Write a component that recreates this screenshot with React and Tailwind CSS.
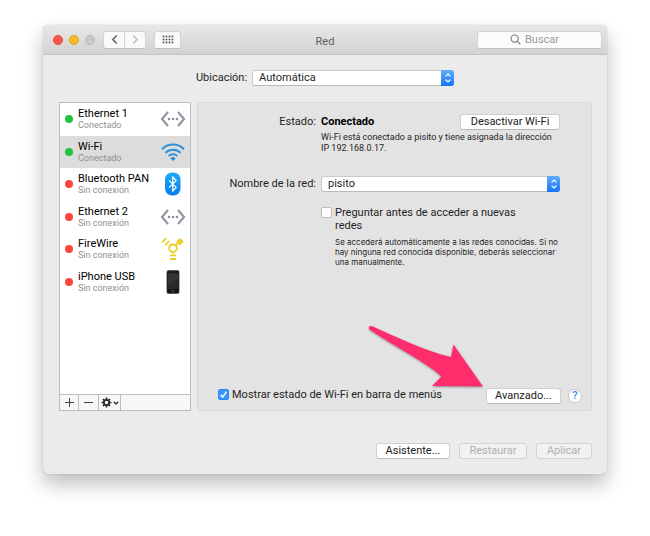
import clsx from "clsx";

const services = [
  { name: "Ethernet 1", status: "Conectado", online: true, icon: EthernetIcon },
  { name: "Wi-Fi", status: "Conectado", online: true, icon: WifiIcon, selected: true },
  { name: "Bluetooth PAN", status: "Sin conexión", online: false, icon: BluetoothIcon },
  { name: "Ethernet 2", status: "Sin conexión", online: false, icon: EthernetIcon },
  { name: "FireWire", status: "Sin conexión", online: false, icon: FireWireIcon },
  { name: "iPhone USB", status: "Sin conexión", online: false, icon: PhoneIcon },
];

function EthernetIcon() {
  return (
    <svg viewBox="0 0 26 18" className="w-[26px] h-[18px]" fill="none">
      <path d="M8 2 2 9l6 7M18 2l6 7-6 7" stroke="#9097a3" strokeWidth="2.2" />
      <g fill="#8a91a0">
        <circle cx="9" cy="9" r="1.3" />
        <circle cx="13" cy="9" r="1.3" />
        <circle cx="17" cy="9" r="1.3" />
      </g>
    </svg>
  );
}

function WifiIcon() {
  return (
    <svg viewBox="0 0 26 18" className="w-[26px] h-[18px]" fill="none" stroke="#2b8fd9" strokeWidth="2">
      <path d="M2 6.2a15.5 15.5 0 0 1 22 0" />
      <path d="M5.4 9.8a10.7 10.7 0 0 1 15.2 0" />
      <path d="M8.7 13.1a6.1 6.1 0 0 1 8.6 0" />
      <path d="m13 18-2.6-2.6a3.6 3.6 0 0 1 5.2 0z" fill="#2b8fd9" stroke="none" />
    </svg>
  );
}

function BluetoothIcon() {
  return (
    <svg viewBox="0 0 26 24" className="w-[26px] h-[24px]" fill="none">
      <defs>
        <linearGradient id="bt" x1="0" y1="0" x2="0" y2="1">
          <stop offset="0" stopColor="#1cacf8" />
          <stop offset="1" stopColor="#087cf0" />
        </linearGradient>
      </defs>
      <rect x="5" y="0.5" width="15.5" height="23" rx="7" fill="url(#bt)" />
      <path d="m9 8.3 7.2 7.2-3.5 3.5V5l3.5 3.5L9 15.7" stroke="#fff" strokeWidth="1.2" />
    </svg>
  );
}

function FireWireIcon() {
  return (
    <svg viewBox="0 0 26 24" className="w-[26px] h-[24px]" fill="none" stroke="#ecd02a">
      <circle cx="13" cy="11.2" r="3.8" strokeWidth="2" />
      <path d="m15.8 8.4 2.4-2.6M10.2 8.4l-.9-.9M13 15v1.6" strokeWidth="2" />
      <path d="m16 5 3.9-3.9 1.6.9 2.3 2.6-4 3.9z" fill="#ecd02a" stroke="none" />
      <path d="M2 5.4 6.4 1M5.2 8.2l4.2-4.2" strokeWidth="1.7" />
      <path d="M10 18.4h6M10 22h6" strokeWidth="1.8" />
    </svg>
  );
}

function PhoneIcon() {
  return (
    <svg viewBox="0 0 26 24" className="w-[26px] h-[24px]">
      <rect x="6.8" y="0.3" width="12.4" height="23.5" rx="1.8" fill="#151515" stroke="#777" strokeWidth="0.5" />
      <rect x="8" y="3.4" width="10" height="15.6" fill="#29292b" />
      <path d="M8 3.4h10v5L8 15.4z" fill="#333336" />
      <path d="M11.4 1.9h3.2" stroke="#555" strokeWidth="0.6" />
      <rect x="12" y="20.2" width="2" height="2" rx="0.5" fill="#111" stroke="#666" strokeWidth="0.5" />
    </svg>
  );
}

function GearIcon() {
  return (
    <svg viewBox="0 0 12 12" className="size-[11px]" fill="none" stroke="#2a2a2a">
      <circle cx="6" cy="6" r="2.9" strokeWidth="2" />
      <path
        d="M6 .6v2M6 9.4v2M.6 6h2M9.4 6h2M2.2 2.2l1.4 1.4M8.4 8.4l1.4 1.4M9.8 2.2 8.4 3.6M3.6 8.4 2.2 9.8"
        strokeWidth="1.8"
      />
    </svg>
  );
}

function Button({ className, ...props }) {
  return (
    <button
      type="button"
      className={clsx(
        "h-4 shrink-0 rounded-[3px] border border-[#cfcfcf] border-b-[#b9b9b9] bg-white text-center leading-[14px] text-[#1c1c1c]",
        "disabled:border-[#d3d3d3] disabled:bg-[#f2f2f2] disabled:text-[#b0b0b0]",
        className
      )}
      {...props}
    />
  );
}

function Select({ id, options, className }) {
  return (
    <div className={clsx("relative", className)}>
      <select
        id={id}
        className="block h-4 w-full appearance-none rounded-[3px] border border-[#cacaca] border-b-[#b9b9b9] bg-white pr-4 pl-[6px] leading-[14px]"
      >
        {options.map((option) => (
          <option key={option}>{option}</option>
        ))}
      </select>
      <span className="pointer-events-none absolute inset-y-0 right-0 flex w-[13px] items-center justify-center rounded-r-[3px] bg-gradient-to-b from-[#5fadfb] to-[#0f74f8]">
        <svg viewBox="0 0 8 12" className="h-3 w-2" fill="none" stroke="#fff" strokeWidth="1.3">
          <path d="m1.6 4.4 2.4-2.3 2.4 2.3M1.6 7.6 4 9.9l2.4-2.3" />
        </svg>
      </span>
    </div>
  );
}

function Checkbox({ label, defaultChecked, className }) {
  return (
    <label className={clsx("flex items-start gap-[3px] leading-[13px]", className)}>
      <span className="relative mt-px block size-[11px] shrink-0">
        <input
          type="checkbox"
          defaultChecked={defaultChecked}
          className="peer block size-[11px] appearance-none rounded-[2px] border border-[#bcbcbc] bg-white checked:border-[#2f87f5] checked:bg-[#3a94fb]"
        />
        <svg
          viewBox="0 0 10 10"
          className="pointer-events-none absolute inset-0 hidden size-[11px] peer-checked:block"
          fill="none"
          stroke="#fff"
          strokeWidth="1.3"
        >
          <path d="m2.4 5.2 1.9 2.2 3.4-5.1" />
        </svg>
      </span>
      <span>{label}</span>
    </label>
  );
}

function TitleBar() {
  const toolButton =
    "flex h-[18px] items-center justify-center border border-[#d4d4d4] border-b-[#bdbdbd] bg-[#fafafa]";

  return (
    <header className="grid h-[30px] grid-cols-[1fr_auto_1fr] items-center rounded-t-[5px] border-b border-[#c3c3c3] bg-gradient-to-b from-[#e8e8e8] to-[#d2d2d2] px-[5px]">
      <div className="flex items-center">
        <div className="mr-2 ml-[5px] flex gap-[6px]">
          <button type="button" aria-label="Cerrar" className="size-[10px] rounded-full border border-[#e2483f] bg-[#fc5650]" />
          <button type="button" aria-label="Minimizar" className="size-[10px] rounded-full border border-[#dfa023] bg-[#fdb924]" />
          <button type="button" aria-label="Ampliar" disabled className="size-[10px] rounded-full border border-[#b9b9b9] bg-[#c9c9c9]" />
        </div>
        <button type="button" aria-label="Atrás" className={clsx(toolButton, "w-[22px] rounded-l-[3px]")}>
          <svg viewBox="0 0 8 12" className="h-[11px] w-[7px]" fill="none" stroke="#555" strokeWidth="1.5">
            <path d="M6.5 1.5 2 6l4.5 4.5" />
          </svg>
        </button>
        <button type="button" aria-label="Adelante" className={clsx(toolButton, "w-[21px] rounded-r-[3px] border-l-0")}>
          <svg viewBox="0 0 8 12" className="h-[11px] w-[7px]" fill="none" stroke="#bbb" strokeWidth="1.5">
            <path d="M1.5 1.5 6 6l-4.5 4.5" />
          </svg>
        </button>
        <button type="button" aria-label="Mostrar todo" className={clsx(toolButton, "ml-2 w-[27px] rounded-[3px]")}>
          <svg viewBox="0 0 12 9" className="h-[9px] w-3" fill="#555">
            {[0, 1, 2, 3].map((col) =>
              [0, 1, 2].map((row) => (
                <rect key={`${col}-${row}`} x={0.6 + col * 3} y={0.6 + row * 3} width="1.7" height="1.7" />
              ))
            )}
          </svg>
        </button>
      </div>
      <h1 className="pt-1 leading-4 text-[#5f5f5f]">Red</h1>
      <div className="flex h-[18px] w-[125px] items-center justify-center gap-1 justify-self-end rounded-[3px] border border-[#d4d4d4] border-b-[#bdbdbd] bg-[#fbfbfb]">
        <svg viewBox="0 0 11 11" className="size-[11px]" fill="none" stroke="#777" strokeWidth="1.1">
          <circle cx="4.6" cy="4.6" r="3.6" />
          <path d="m7.2 7.2 3.1 3.1" />
        </svg>
        <input
          type="text"
          aria-label="Buscar"
          placeholder="Buscar"
          className="w-11 bg-transparent p-0 leading-4 outline-none placeholder:text-[#9a9a9a]"
        />
      </div>
    </header>
  );
}

function Sidebar() {
  return (
    <aside className="flex w-[132px] shrink-0 flex-col border border-[#bdbdbd] bg-white">
      <ul className="grid h-[195px] auto-rows-fr">
        {services.map(({ name, status, online, icon: Icon, selected }) => (
          <li key={name} className={clsx("flex items-center pr-1 pl-[5px]", selected && "bg-[#dcdcdc]")}>
            <span className={clsx("mr-[5px] size-2 shrink-0 rounded-full", online ? "bg-[#23c23e]" : "bg-[#fb453e]")} />
            <div className="flex-1 whitespace-nowrap">
              <p className="leading-[13px] text-black">{name}</p>
              <p className="text-[9px] leading-[11px] text-[#8f8f8f]">{status}</p>
            </div>
            <Icon />
          </li>
        ))}
      </ul>
      <div className="mt-auto flex h-4 border-t border-[#bdbdbd] bg-[#f7f7f7]">
        <button type="button" aria-label="Añadir" className="flex w-[19px] items-center justify-center border-r border-[#bdbdbd]">
          <svg viewBox="0 0 9 9" className="size-[9px]" stroke="#444">
            <path d="M4.5 0v9M0 4.5h9" />
          </svg>
        </button>
        <button type="button" aria-label="Eliminar" className="flex w-5 items-center justify-center border-r border-[#bdbdbd]">
          <svg viewBox="0 0 9 9" className="size-[9px]" stroke="#444">
            <path d="M0 4.5h9" />
          </svg>
        </button>
        <button type="button" aria-label="Acciones" className="flex w-[22px] items-center justify-center gap-px border-r border-[#bdbdbd]">
          <GearIcon />
          <svg viewBox="0 0 6 4" className="h-1 w-[6px]" fill="none" stroke="#333" strokeWidth="1.3">
            <path d="m.7.7 2.3 2.3L5.3.7" />
          </svg>
        </button>
      </div>
    </aside>
  );
}

function PointerArrow() {
  return (
    <svg
      viewBox="0 0 120 66"
      className="pointer-events-none absolute right-[106px] bottom-5 h-[66px] w-[120px] drop-shadow-[0_1px_1px_rgba(0,0,0,0.35)]"
      fill="#ff2d6b"
    >
      <path d="M7.2 2.2C5 1 2.5 3.5 4.6 5.6C28 22 58 36 76.500 52.500L67 62L118 62.500L88.500 20.500L86 33C60 27 34 14 7.200 2.200Z" />
    </svg>
  );
}

function WifiPanel() {
  return (
    <section className="relative flex flex-1 flex-col rounded-[3px] border border-[#dadada] bg-[#e3e3e3] pt-[11px] pb-[6px]">
      <div className="grid grid-cols-[118px_1fr] gap-x-[5px] pr-[31px]">
        <p className="text-right leading-4">Estado:</p>
        <div>
          <div className="flex justify-between">
            <strong className="leading-4 font-bold text-black">Conectado</strong>
            <Button className="w-[100px]">Desactivar Wi-Fi</Button>
          </div>
          <p className="mt-[2px] text-[9px] leading-[11px]">
            Wi-Fi está conectado a pisito y tiene asignada la dirección IP 192.168.0.17.
          </p>
        </div>

        <label htmlFor="network" className="mt-[22px] text-right leading-4 whitespace-nowrap">
          Nombre de la red:
        </label>
        <Select id="network" options={["pisito"]} className="mt-[22px]" />

        <div className="col-start-2">
          <Checkbox label="Preguntar antes de acceder a nuevas redes" className="mt-[14px] mr-[30px]" />
          <p className="mt-[5px] pl-[14px] font-['Inter','Liberation_Sans',sans-serif] text-[8px] leading-[10px]">
            Se accederá automáticamente a las redes conocidas. Si no hay ninguna red conocida disponible, deberás
            seleccionar una manualmente.
          </p>
        </div>
      </div>

      <div className="mt-auto flex items-start pr-[9px] pl-5">
        <Checkbox label="Mostrar estado de Wi-Fi en barra de menús" defaultChecked />
        <Button className="ml-auto w-[75px]">Avanzado...</Button>
        <button
          type="button"
          aria-label="Ayuda"
          className="mt-px ml-[7px] size-[14px] rounded-full border border-[#cdcdcd] bg-white text-center text-[11px] leading-3 font-medium text-[#2f8df5]"
        >
          ?
        </button>
      </div>
      <PointerArrow />
    </section>
  );
}

export default function App() {
  return (
    <div className="min-h-screen bg-white px-[43px] pt-[25px] pb-[62px] font-['Roboto','Liberation_Sans',sans-serif] text-[11px] text-[#1f1f1f]">
      <main className="rounded-[5px] bg-[#ebebeb] shadow-[0_0_1px_rgba(0,0,0,0.35),0_10px_20px_rgba(0,0,0,0.26)]">
        <TitleBar />
        <div className="flex items-center justify-center gap-[5px] pt-[15px]">
          <label htmlFor="location" className="leading-4">
            Ubicación:
          </label>
          <Select id="location" options={["Automática"]} className="w-[202px]" />
        </div>
        <div className="mt-4 flex min-h-[309px] gap-[6px] pr-[15px] pl-4">
          <Sidebar />
          <WifiPanel />
        </div>
        <footer className="flex justify-end gap-[9px] pt-8 pr-[15px] pb-[15px]">
          <Button className="w-[74px]">Asistente...</Button>
          <Button className="w-[68px]" disabled>
            Restaurar
          </Button>
          <Button className="w-[56px]" disabled>
            Aplicar
          </Button>
        </footer>
      </main>
    </div>
  );
}
